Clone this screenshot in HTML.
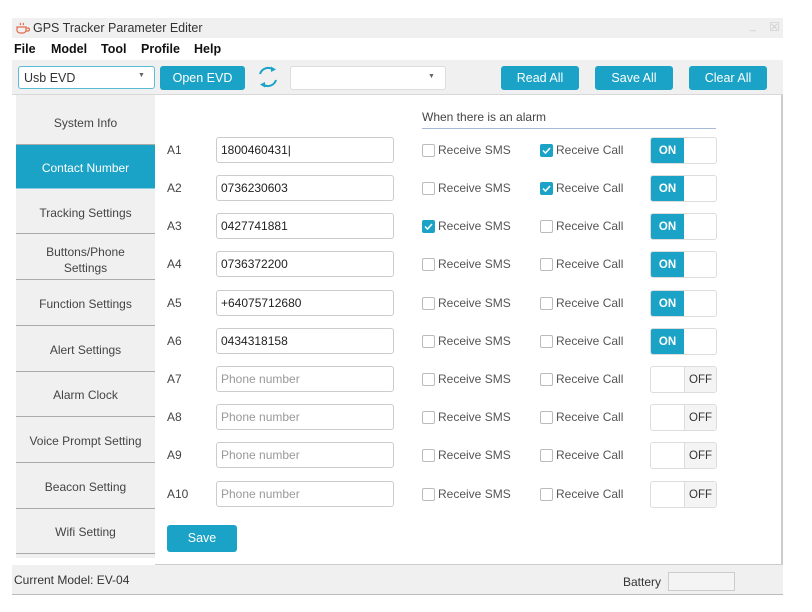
<!DOCTYPE html>
<html><head><meta charset="utf-8"><style>
*{box-sizing:border-box;margin:0;padding:0}
body{width:812px;height:612px;background:#fff;position:relative;overflow:hidden;font-family:"Liberation Sans",Arial,sans-serif;font-size:12px;color:#333}
.a{position:absolute}
.title{left:12px;top:18px;width:771px;height:20px;background:#f0f0f0}
.menu{left:12px;top:38px;width:771px;height:22px;background:#fff;font-weight:bold;font-size:12.5px;color:#111}
.tool{left:12px;top:60px;width:771px;height:35px;background:#f0f0f0;border-bottom:1px solid #d8d8d8}
.btn{background:#1aa3c6;color:#fff;border-radius:3px;text-align:center;font-size:12.5px}
.side{left:16px;top:95px;width:139px;height:463px;background:#f0f0f0}
.si{position:absolute;left:0;width:139px;text-align:center;color:#444;font-size:12px;border-bottom:1px solid #aaa}
.panel{left:155px;top:95px;width:628px;height:470px;background:#fff;border-right:2px solid #ccc;border-bottom:1px solid #ccc}
.lbl{left:167px;font-size:12px;color:#444}
.inp{left:216px;width:178px;height:26px;border:1px solid #ccc;border-radius:3px;padding-left:4px;line-height:24px;font-size:12px;color:#222}
.ph{color:#999}
.cb{width:13px;height:13px;border:1px solid #bbb;border-radius:2px;background:#fff;margin-top:1px}
.cb.on{background:#1aa3c6;border-color:#1aa3c6}
.ct{font-size:12px;color:#555}
.tg{left:650px;width:67px;height:27px;border:1px solid #ddd;border-radius:3px;overflow:hidden;background:#fff}
.tg .on{position:absolute;left:0;top:0;width:33px;height:25px;background:#1aa3c6;color:#fff;font-weight:bold;font-size:11.5px;display:flex;align-items:center;justify-content:center}
.tg .off{position:absolute;right:0;top:0;width:32px;height:25px;background:#f4f4f4;border-left:1px solid #ddd;color:#333;font-size:11.5px;display:flex;align-items:center;justify-content:center}
.status{left:12px;top:565px;width:771px;height:30px;background:#f0f0f0;border-bottom:1px solid #bbb}
</style></head><body>
<div class="a title">
 <svg class="a" style="left:4px;top:4px" width="14" height="12" viewBox="0 0 14 12"><path d="M1 5h9v3a3 3 0 0 1-3 3H4a3 3 0 0 1-3-3zM10 6h2a1.5 1.5 0 0 1 0 3h-2M4 1q1 1 0 2M7 1q1 1 0 2" fill="none" stroke="#e06a4a" stroke-width="1.2"/></svg>
 <span class="a" style="left:21px;top:3px;font-size:12.5px;color:#333">GPS Tracker Parameter Editer</span>
 <span class="a" style="left:738px;top:2px;color:#ccc;font-size:11px">_</span>
 <span class="a" style="left:757px;top:2px;color:#ccc;font-size:12px">☒</span>
</div>
<div class="a menu">
 <span class="a" style="left:2px;top:4px">File</span>
 <span class="a" style="left:39px;top:4px">Model</span>
 <span class="a" style="left:89px;top:4px">Tool</span>
 <span class="a" style="left:129px;top:4px">Profile</span>
 <span class="a" style="left:182px;top:4px">Help</span>
</div>
<div class="a tool">
 <div class="a" style="left:6px;top:6px;width:137px;height:23px;background:#fff;border:1px solid #5bbcd6;border-radius:3px"><span class="a" style="left:5px;top:4px;font-size:12.5px">Usb EVD</span><span class="a" style="left:119px;top:5px;font-size:7px;color:#666">▼</span></div>
 <div class="a btn" style="left:148px;top:6px;width:85px;height:24px;line-height:24px">Open EVD</div>
 <svg class="a" style="left:244px;top:5px" width="24" height="24" viewBox="0 0 24 24"><path d="M4 9A8.5 8.5 0 0 1 17 4.5M20 15A8.5 8.5 0 0 1 7 19.5" fill="none" stroke="#1aa3c6" stroke-width="2"/><path d="M15 1.5l5 3-5 2.5z M9 22.5l-5-3 5-2.5z" fill="#1aa3c6"/></svg>
 <div class="a" style="left:278px;top:6px;width:156px;height:24px;background:#fff;border:1px solid #ddd;border-radius:3px"><span class="a" style="left:137px;top:6px;font-size:7px;color:#666">▼</span></div>
 <div class="a btn" style="left:489px;top:6px;width:78px;height:24px;line-height:24px">Read All</div>
 <div class="a btn" style="left:583px;top:6px;width:78px;height:24px;line-height:24px">Save All</div>
 <div class="a btn" style="left:677px;top:6px;width:78px;height:24px;line-height:24px">Clear All</div>
</div>
<div class="a side">
 <div class="si" style="top:4px;height:46px;line-height:48px">System Info</div>
 <div class="si" style="top:50px;height:44px;line-height:46px;background:#1aa3c6;color:#fff;border-bottom:1px solid #8cd">Contact Number</div>
 <div class="si" style="top:94px;height:45px;line-height:48px">Tracking Settings</div>
 <div class="si" style="top:139px;height:46px;padding-top:10px;line-height:16px">Buttons/Phone<br>Settings</div>
 <div class="si" style="top:185px;height:46px;line-height:48px">Function Settings</div>
 <div class="si" style="top:231px;height:46px;line-height:48px">Alert Settings</div>
 <div class="si" style="top:277px;height:45px;line-height:47px">Alarm Clock</div>
 <div class="si" style="top:322px;height:46px;line-height:48px">Voice Prompt Setting</div>
 <div class="si" style="top:368px;height:46px;line-height:48px">Beacon Setting</div>
 <div class="si" style="top:414px;height:45px;line-height:47px">Wifi Setting</div>
</div>
<div class="a panel"></div>
<div class="a" style="left:422px;top:110px;font-size:12px;color:#444">When there is an alarm</div>
<div class="a" style="left:422px;top:128px;width:294px;height:1px;background:#a8b8d8"></div>

<div class="a lbl" style="top:143px">A1</div><div class="a inp" style="top:137px">1800460431|</div>
<div class="a cb" style="left:422px;top:143px"></div><div class="a ct" style="left:438px;top:143px">Receive SMS</div>
<div class="a cb on" style="left:540px;top:143px"><svg width="11" height="11" viewBox="0 0 11 11"><path d="M2 5.5l2.5 2.5 4.5-5" fill="none" stroke="#fff" stroke-width="1.5"/></svg></div><div class="a ct" style="left:556px;top:143px">Receive Call</div>
<div class="a tg" style="top:137px"><div class="on">ON</div></div>

<div class="a lbl" style="top:181px">A2</div><div class="a inp" style="top:175px">0736230603</div>
<div class="a cb" style="left:422px;top:181px"></div><div class="a ct" style="left:438px;top:181px">Receive SMS</div>
<div class="a cb on" style="left:540px;top:181px"><svg width="11" height="11" viewBox="0 0 11 11"><path d="M2 5.5l2.5 2.5 4.5-5" fill="none" stroke="#fff" stroke-width="1.5"/></svg></div><div class="a ct" style="left:556px;top:181px">Receive Call</div>
<div class="a tg" style="top:175px"><div class="on">ON</div></div>

<div class="a lbl" style="top:219px">A3</div><div class="a inp" style="top:213px">0427741881</div>
<div class="a cb on" style="left:422px;top:219px"><svg width="11" height="11" viewBox="0 0 11 11"><path d="M2 5.5l2.5 2.5 4.5-5" fill="none" stroke="#fff" stroke-width="1.5"/></svg></div><div class="a ct" style="left:438px;top:219px">Receive SMS</div>
<div class="a cb" style="left:540px;top:219px"></div><div class="a ct" style="left:556px;top:219px">Receive Call</div>
<div class="a tg" style="top:213px"><div class="on">ON</div></div>

<div class="a lbl" style="top:257px">A4</div><div class="a inp" style="top:251px">0736372200</div>
<div class="a cb" style="left:422px;top:257px"></div><div class="a ct" style="left:438px;top:257px">Receive SMS</div>
<div class="a cb" style="left:540px;top:257px"></div><div class="a ct" style="left:556px;top:257px">Receive Call</div>
<div class="a tg" style="top:251px"><div class="on">ON</div></div>

<div class="a lbl" style="top:296px">A5</div><div class="a inp" style="top:290px">+64075712680</div>
<div class="a cb" style="left:422px;top:296px"></div><div class="a ct" style="left:438px;top:296px">Receive SMS</div>
<div class="a cb" style="left:540px;top:296px"></div><div class="a ct" style="left:556px;top:296px">Receive Call</div>
<div class="a tg" style="top:290px"><div class="on">ON</div></div>

<div class="a lbl" style="top:334px">A6</div><div class="a inp" style="top:328px">0434318158</div>
<div class="a cb" style="left:422px;top:334px"></div><div class="a ct" style="left:438px;top:334px">Receive SMS</div>
<div class="a cb" style="left:540px;top:334px"></div><div class="a ct" style="left:556px;top:334px">Receive Call</div>
<div class="a tg" style="top:328px"><div class="on">ON</div></div>

<div class="a lbl" style="top:372px">A7</div><div class="a inp ph" style="top:366px">Phone number</div>
<div class="a cb" style="left:422px;top:372px"></div><div class="a ct" style="left:438px;top:372px">Receive SMS</div>
<div class="a cb" style="left:540px;top:372px"></div><div class="a ct" style="left:556px;top:372px">Receive Call</div>
<div class="a tg" style="top:366px"><div class="off">OFF</div></div>

<div class="a lbl" style="top:410px">A8</div><div class="a inp ph" style="top:404px">Phone number</div>
<div class="a cb" style="left:422px;top:410px"></div><div class="a ct" style="left:438px;top:410px">Receive SMS</div>
<div class="a cb" style="left:540px;top:410px"></div><div class="a ct" style="left:556px;top:410px">Receive Call</div>
<div class="a tg" style="top:404px"><div class="off">OFF</div></div>

<div class="a lbl" style="top:448px">A9</div><div class="a inp ph" style="top:442px">Phone number</div>
<div class="a cb" style="left:422px;top:448px"></div><div class="a ct" style="left:438px;top:448px">Receive SMS</div>
<div class="a cb" style="left:540px;top:448px"></div><div class="a ct" style="left:556px;top:448px">Receive Call</div>
<div class="a tg" style="top:442px"><div class="off">OFF</div></div>

<div class="a lbl" style="top:487px">A10</div><div class="a inp ph" style="top:481px">Phone number</div>
<div class="a cb" style="left:422px;top:487px"></div><div class="a ct" style="left:438px;top:487px">Receive SMS</div>
<div class="a cb" style="left:540px;top:487px"></div><div class="a ct" style="left:556px;top:487px">Receive Call</div>
<div class="a tg" style="top:481px"><div class="off">OFF</div></div>

<div class="a btn" style="left:167px;top:525px;width:70px;height:27px;line-height:27px">Save</div>

<div class="a status">
 <span class="a" style="left:2px;top:8px;font-size:12px;color:#333">Current Model: EV-04</span>
 <span class="a" style="left:611px;top:10px;font-size:12px;color:#333">Battery</span>
 <div class="a" style="left:656px;top:7px;width:67px;height:19px;border:1px solid #ccc;background:#f4f4f4"></div>
</div>
</body></html>
